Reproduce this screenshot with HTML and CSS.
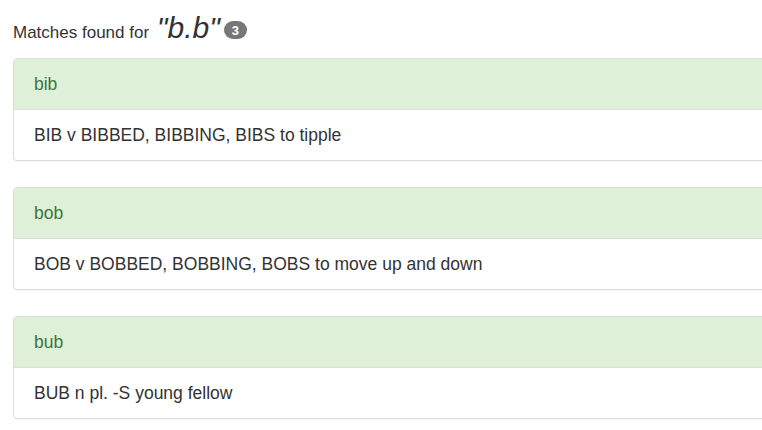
FILE: index.html
```html
<!DOCTYPE html>
<html>
<head>
<meta charset="utf-8">
<link rel="stylesheet" href="styles.css">
</head>
<body>
<div class="page">
  <div class="title">Matches found for <span class="query">"b.b"</span><span class="badge">3</span></div>
  <div class="panel">
    <div class="panel-heading">bib</div>
    <div class="panel-body">BIB v BIBBED, BIBBING, BIBS to tipple</div>
  </div>
  <div class="panel">
    <div class="panel-heading">bob</div>
    <div class="panel-body">BOB v BOBBED, BOBBING, BOBS to move up and down</div>
  </div>
  <div class="panel">
    <div class="panel-heading">bub</div>
    <div class="panel-body">BUB n pl. -S young fellow</div>
  </div>
</div>
</body>
</html>
```
FILE: styles.css
```css
html, body {
  margin: 0;
  padding: 0;
  background: #fff;
}
body {
  font-family: "Liberation Sans", Arial, sans-serif;
  font-size: 17.5px;
  color: #333;
  overflow: hidden;
}
.page {
  padding: 8px 0 0 13px;
  width: 800px;
}
.title {
  height: 50px;
  line-height: 40px;
  font-size: 17px;
  color: #333;
}
.query {
  font-style: italic;
  font-size: 30px;
  margin-left: 3px;
}
.badge {
  display: inline-block;
  background: #777;
  color: #fff;
  font-size: 13px;
  font-weight: bold;
  line-height: 13px;
  padding: 3px 8px 2px;
  border-radius: 9px;
  margin-left: 4px;
  vertical-align: 3px;
}
.panel {
  border: 1px solid #ddd;
  border-radius: 4px;
  box-shadow: 0 1px 1px rgba(0,0,0,.05);
  margin-bottom: 26px;
  background: #fff;
}
.panel-heading {
  background: #dff0d8;
  color: #3c763d;
  padding: 15px 20px;
  line-height: 20px;
  border-bottom: 1px solid #ddd;
  border-radius: 3px 3px 0 0;
}
.panel-body {
  padding: 15px 20px;
  line-height: 20px;
}
```
